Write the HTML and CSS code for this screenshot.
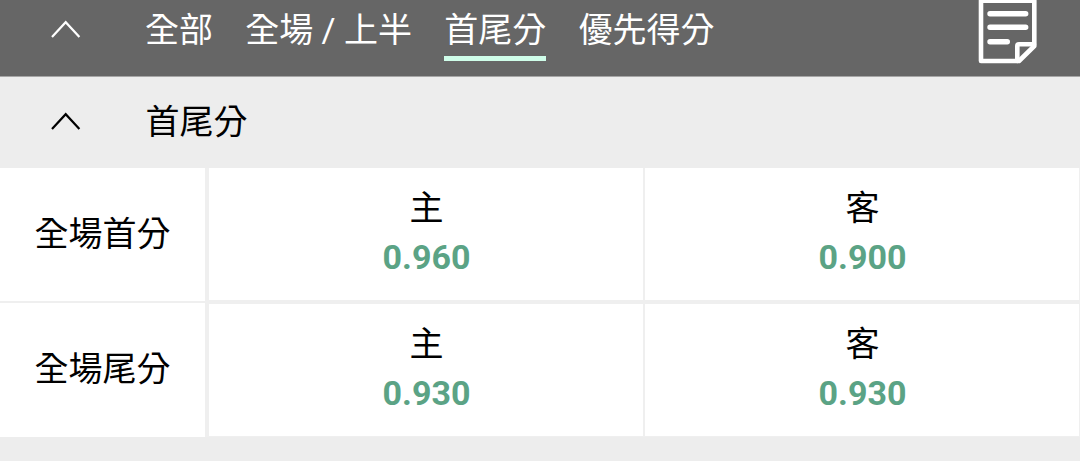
FILE: index.html
```
<!DOCTYPE html>
<html lang="zh-TW">
<head>
    <meta charset="UTF-8">
    <meta name="viewport" content="width=device-width, initial-scale=1.0">
    <title>首尾分</title>
    <link rel="stylesheet" href="styles.css">
</head>
<body>
    <div class="tab-bar">
        <svg class="arrow" viewBox="0 0 30 18"><path d="M1 17L14.7 2.2L28.4 17"/></svg>
        <div class="tabs">
            <span class="tab">全部</span>
            <span class="tab">全場 / 上半</span>
            <span class="tab active">首尾分</span>
            <span class="tab">優先得分</span>
        </div>
        <svg class="note" viewBox="0 0 60 66">
            <path d="M4 .6H57.3V46L42 61H4Z"/>
            <path d="M57 44.3H42Q40.3 44.3 40.3 46V61"/>
            <path class="note-lines" d="M13 13.8H48.7M13 27.3H48.7M13 41.8H30.3"/>
        </svg>
    </div>
    <div class="section-title">
        <svg class="arrow" viewBox="0 0 30 18"><path d="M1 17L14.7 2.2L28.4 17"/></svg>
        <span>首尾分</span>
    </div>
    <div class="odds-table">
        <div class="names">
            <div class="row-name">全場首分</div>
            <div class="row-name">全場尾分</div>
        </div>
        <div class="odds-grid">
            <div class="odds"><span>主</span><b>0.960</b></div>
            <div class="odds"><span>客</span><b>0.900</b></div>
            <div class="odds"><span>主</span><b>0.930</b></div>
            <div class="odds"><span>客</span><b>0.930</b></div>
        </div>
    </div>
</body>
</html>
```
FILE: styles.css
```
* {
    box-sizing: border-box;
}

body {
    margin: 0;
    height: 461px;
    overflow: hidden;
    background-color: #ededed;
    color: #000;
    font-family: Roboto, "Noto Sans CJK TC", sans-serif;
    font-size: 34px;
}

/* Top tab bar */
.tab-bar {
    height: 77px;
    display: flex;
    align-items: flex-start;
    padding: 0 43px 0 51px;
    background-color: #666;
    border-bottom: 1px solid #a6a6a6;
    color: #fff;
}

.arrow {
    width: 30px;
    height: 18px;
    flex: none;
    fill: none;
    stroke: currentColor;
    stroke-width: 2.2;
}

.tab-bar .arrow {
    margin-top: 20px;
}

.tabs {
    display: flex;
    gap: 32.2px;
    margin-left: 64px;
    flex-grow: 1;
}

.tab {
    height: 60.5px;
    line-height: 61px;
    white-space: nowrap;
    border-bottom: 5px solid transparent;
}

.tab.active {
    border-bottom-color: #cffde9;
}

.note {
    width: 60px;
    height: 66px;
    fill: none;
    stroke: #fff;
    stroke-width: 4.6;
    stroke-linejoin: round;
    stroke-linecap: round;
}

.note-lines {
    stroke-width: 5.4;
}

/* Section header */
.section-title {
    height: 91px;
    display: flex;
    align-items: flex-start;
    gap: 64.5px;
    padding-left: 51px;
    line-height: 91px;
}

.section-title .arrow {
    margin-top: 35px;
}

/* Odds table */
.odds-table {
    display: flex;
    gap: 4px;
    background-color: #efefef;
    padding-right: 1px;
}

.names {
    width: 205px;
    display: grid;
    grid-template-rows: 133px 134px;
    row-gap: 2px;
}

.row-name {
    text-align: center;
    line-height: 133px;
    background-color: #fff;
}

.odds-grid {
    flex-grow: 1;
    display: grid;
    grid-template-columns: 1fr 1fr;
    grid-template-rows: 132px 132px;
    gap: 4px 2px;
}

.odds {
    display: flex;
    flex-direction: column;
    align-items: center;
    padding: 15px 0 0 1px;
    background-color: #fff;
}

.odds span,
.odds b {
    line-height: 50px;
}

.odds b {
    margin-top: -1px;
    color: #5ba385;
    font-weight: 700;
}
```
